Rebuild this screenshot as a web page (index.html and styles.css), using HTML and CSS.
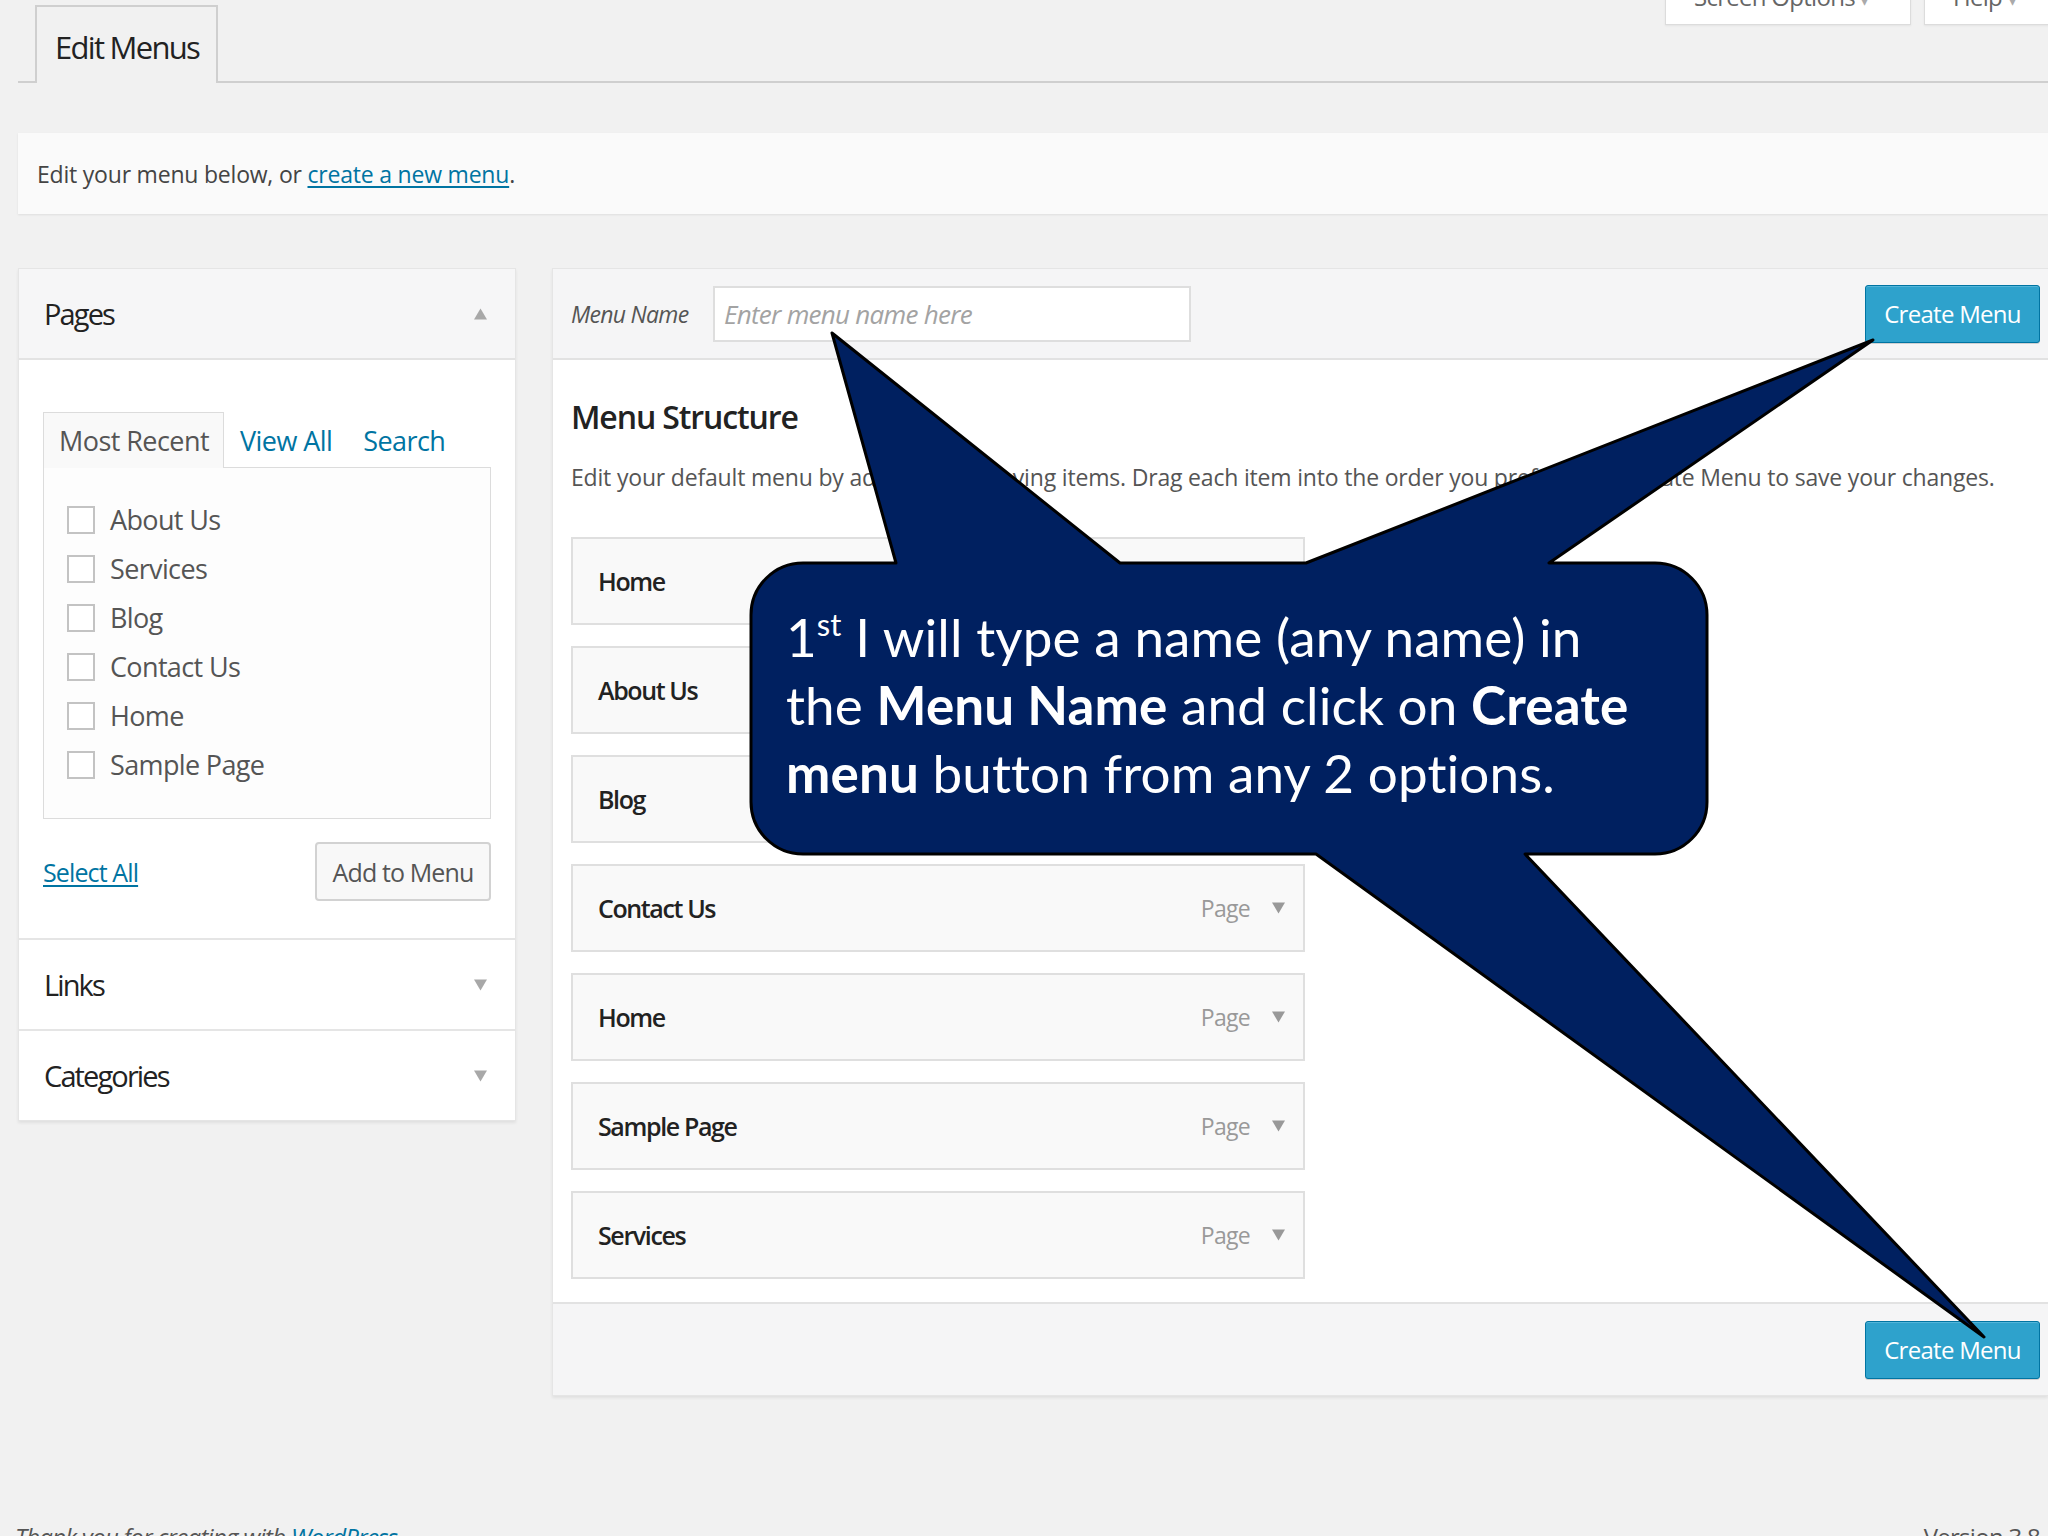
FILE: index.html
```html
<!DOCTYPE html>
<html lang="en">
<head>
<meta charset="utf-8">
<title>Edit Menus</title>
<link rel="stylesheet" href="styles.css">
</head>
<body>
<div class="wrap">
  <div class="top">
    <div class="nav-tab">Edit Menus</div>
    <div class="meta">
      <div class="meta-btn screen">Screen Options <span class="caret">▾</span></div>
      <div class="meta-btn help">Help <span class="caret">▾</span></div>
    </div>
  </div>

  <div class="notice"><span>Edit your menu below, or <a class="link" href="#">create a new menu</a>.</span></div>

  <div class="columns">
    <div class="left">
      <div class="accordion">
        <div class="acc-section open">
          <div class="acc-head grey"><span>Pages</span><svg class="tri" viewBox="0 0 14 12"><path d="M7 0 L14 12 L0 12 Z"/></svg></div>
          <div class="acc-body">
            <div class="tabs">
              <div class="tab active">Most Recent</div>
              <div class="tab">View All</div>
              <div class="tab">Search</div>
            </div>
            <div class="checklist">
              <label class="check"><span class="box"></span>About Us</label>
              <label class="check"><span class="box"></span>Services</label>
              <label class="check"><span class="box"></span>Blog</label>
              <label class="check"><span class="box"></span>Contact Us</label>
              <label class="check"><span class="box"></span>Home</label>
              <label class="check"><span class="box"></span>Sample Page</label>
            </div>
            <div class="actions">
              <a class="link select-all" href="#">Select All</a>
              <div class="btn-secondary">Add to Menu</div>
            </div>
          </div>
        </div>
        <div class="acc-section">
          <div class="acc-head"><span>Links</span><svg class="tri" viewBox="0 0 14 12"><path d="M0 0 L14 0 L7 12 Z"/></svg></div>
        </div>
        <div class="acc-section">
          <div class="acc-head"><span>Categories</span><svg class="tri" viewBox="0 0 14 12"><path d="M0 0 L14 0 L7 12 Z"/></svg></div>
        </div>
      </div>
    </div>

    <div class="right">
      <div class="panel-head">
        <span class="menu-name-label">Menu Name</span>
        <div class="name-input">Enter menu name here</div>
        <div class="btn-primary">Create Menu</div>
      </div>
      <div class="panel-body">
        <h3 class="structure-title">Menu Structure</h3>
        <p class="structure-desc">Edit your default menu by adding or removing items. Drag each item into the order you prefer. Click Create Menu to save your changes.</p>
        <div class="items">
          <div class="item"><span class="item-title">Home</span><span class="item-type">Page</span><svg class="tri small" viewBox="0 0 14 12"><path d="M0 0 L14 0 L7 12 Z"/></svg></div>
          <div class="item"><span class="item-title">About Us</span><span class="item-type">Page</span><svg class="tri small" viewBox="0 0 14 12"><path d="M0 0 L14 0 L7 12 Z"/></svg></div>
          <div class="item"><span class="item-title">Blog</span><span class="item-type">Page</span><svg class="tri small" viewBox="0 0 14 12"><path d="M0 0 L14 0 L7 12 Z"/></svg></div>
          <div class="item"><span class="item-title">Contact Us</span><span class="item-type">Page</span><svg class="tri small" viewBox="0 0 14 12"><path d="M0 0 L14 0 L7 12 Z"/></svg></div>
          <div class="item"><span class="item-title">Home</span><span class="item-type">Page</span><svg class="tri small" viewBox="0 0 14 12"><path d="M0 0 L14 0 L7 12 Z"/></svg></div>
          <div class="item"><span class="item-title">Sample Page</span><span class="item-type">Page</span><svg class="tri small" viewBox="0 0 14 12"><path d="M0 0 L14 0 L7 12 Z"/></svg></div>
          <div class="item"><span class="item-title">Services</span><span class="item-type">Page</span><svg class="tri small" viewBox="0 0 14 12"><path d="M0 0 L14 0 L7 12 Z"/></svg></div>
        </div>
      </div>
      <div class="panel-foot">
        <div class="btn-primary">Create Menu</div>
      </div>
    </div>
  </div>

  <div class="footer">
    <span class="thanks">Thank you for creating with <a class="link plain" href="#">WordPress</a>.</span>
    <span class="version">Version 3.8</span>
  </div>
</div>

<div class="callout">
  <svg class="callout-shape" width="2048" height="1536" viewBox="0 0 2048 1536">
    <path d="M803 563 L896 563 L832 333 L1120 563 L1306 563 L1873 340 L1549 563 L1655 563 A52 52 0 0 1 1707 615 L1707 802 A52 52 0 0 1 1655 854 L1525 854 L1984 1337 L1316 854 L803 854 A52 52 0 0 1 751 802 L751 615 A52 52 0 0 1 803 563 Z"/>
  </svg>
  <div class="callout-text">1<sup>st</sup> I will type a name (any name) in<br>the <b>Menu Name</b> and click on <b>Create</b><br><b>menu</b> button from any 2 options.</div>
</div>
</body>
</html>
```

FILE: styles.css
```css
html, body {
  margin: 0;
  padding: 0;
}
body {
  width: 2048px;
  height: 1536px;
  overflow: hidden;
  position: relative;
  background: #f1f1f1;
  font-family: "Open Sans", "Liberation Sans", sans-serif;
  letter-spacing: -0.045em;
  color: #444;
}
.wrap {
  padding-left: 18px;
}
.link {
  color: #0074a2;
  text-decoration: underline;
  text-underline-offset: 3px;
}
.link.plain {
  text-decoration: none;
}

/* top tab row */
.top {
  display: flex;
  justify-content: space-between;
  align-items: flex-start;
  border-bottom: 2px solid #cfcfcf;
  height: 81px;
}
.nav-tab {
  margin-left: 17px;
  margin-top: 3px;
  height: 78px;
  padding: 4px 17px 0 18px;
  box-sizing: border-box;
  border: 2px solid #cfcfcf;
  border-bottom: none;
  background: #f1f1f1;
  display: flex;
  align-items: center;
  font-size: 31px;
  letter-spacing: -0.055em;
  color: #222;
  position: relative;
  top: 2px;
}
.meta {
  display: flex;
  gap: 13px;
  margin-right: -26px;
}
.meta-btn {
  margin-top: -30px;
  height: 55px;
  box-sizing: border-box;
  background: #fff;
  border: 1px solid #dcdcdc;
  box-shadow: 0 1px 2px rgba(0,0,0,0.06);
  font-size: 24px;
  color: #666;
  line-height: 52px;
  padding: 0 28px;
  white-space: nowrap;
}
.meta-btn.screen { width: 246px; }
.meta-btn.help { width: 150px; }
.caret { color: #aaa; font-size: 18px; }

/* notice */
.notice {
  margin-top: 50px;
  height: 81px;
  box-sizing: border-box;
  background: #fafafa;
  box-shadow: 0 1px 2px rgba(0,0,0,0.08);
  display: flex;
  align-items: center;
  padding-left: 19px;
  font-size: 23px;
  letter-spacing: -0.009em;
  color: #444;
}

/* columns */
.columns {
  margin-top: 54px;
  display: flex;
  gap: 36px;
  align-items: flex-start;
}
.left {
  width: 498px;
  flex: none;
}
.accordion {
  background: #fff;
  border: 1px solid #e5e5e5;
  box-shadow: 0 2px 3px rgba(0,0,0,0.07);
}
.acc-section + .acc-section {
  border-top: 2px solid #e5e5e5;
}
.acc-head {
  height: 89px;
  display: flex;
  align-items: center;
  justify-content: space-between;
  padding: 0 28px 0 25px;
  font-size: 29px;
  letter-spacing: -0.065em;
  color: #222;
}
.acc-head.grey {
  background: #f6f6f7;
  border-bottom: 2px solid #e3e3e3;
}
.tri {
  width: 13px;
  height: 12px;
  fill: #a8a8a8;
}
.acc-body {
  padding: 51px 24px 37px 24px;
}
.tabs {
  display: flex;
  align-items: flex-end;
  height: 56px;
  letter-spacing: -0.035em;
}
.tab {
  font-size: 27px;
  color: #0074a2;
  padding: 0 15px 0 16px;
  line-height: 52px;
}
.tab.active {
  color: #555;
  background: #f9f9f9;
  border: 1px solid #dcdcdc;
  border-bottom: none;
  height: 56px;
  box-sizing: border-box;
  padding: 0 14px 0 15px;
  line-height: 56px;
  position: relative;
  top: 1px;
}
.checklist {
  border: 1px solid #dcdcdc;
  background: #fdfdfd;
  height: 352px;
  box-sizing: border-box;
  padding: 27px 0 0 23px;
  letter-spacing: -0.04em;
}
.check {
  display: flex;
  align-items: center;
  height: 49px;
  font-size: 27px;
  color: #555;
}
.box {
  width: 28px;
  height: 28px;
  box-sizing: border-box;
  border: 2px solid #c3c3c3;
  background: #fff;
  margin-right: 15px;
  flex: none;
}
.actions {
  margin-top: 23px;
  display: flex;
  align-items: center;
  justify-content: space-between;
  letter-spacing: -0.055em;
}
.select-all {
  font-size: 25px;
}
.btn-secondary {
  width: 176px;
  height: 59px;
  box-sizing: border-box;
  border: 2px solid #d2d2d2;
  border-radius: 4px;
  background: #f8f8f8;
  display: flex;
  align-items: center;
  justify-content: center;
  font-size: 25px;
  color: #555;
}

/* right panel */
.right {
  flex: 1;
  background: #fff;
  border: 1px solid #e5e5e5;
  border-right: none;
  box-shadow: 0 2px 3px rgba(0,0,0,0.07);
}
.panel-head {
  height: 91px;
  box-sizing: border-box;
  background: #f5f5f6;
  border-bottom: 2px solid #e2e2e2;
  display: flex;
  align-items: center;
  padding: 0 8px 0 18px;
}
.menu-name-label {
  font-size: 23px;
  font-style: italic;
  color: #555;
  width: 142px;
  flex: none;
}
.name-input {
  width: 478px;
  height: 56px;
  box-sizing: border-box;
  border: 2px solid #dedede;
  background: #fff;
  font-size: 26px;
  font-style: italic;
  color: #a3a3a3;
  padding-left: 9px;
  display: flex;
  align-items: center;
}
.btn-primary {
  margin-left: auto;
  width: 175px;
  height: 58px;
  box-sizing: border-box;
  background: #2ea2cc;
  border: 1px solid #0074a2;
  border-radius: 3px;
  box-shadow: inset 0 1px 0 rgba(120,200,230,0.5), 0 1px 0 rgba(0,0,0,0.15);
  color: #fff;
  font-size: 24px;
  letter-spacing: -0.03em;
  display: flex;
  align-items: center;
  justify-content: center;
}
.panel-body {
  padding: 35px 0 23px 18px;
}
.structure-title {
  margin: 0;
  font-size: 32px;
  line-height: 44px;
  font-weight: 600;
  color: #222;
  letter-spacing: -0.035em;
}
.structure-desc {
  margin: 22px 0 0 0;
  font-size: 23px;
  line-height: 32px;
  color: #555;
  letter-spacing: -0.008em;
  white-space: nowrap;
}
.items {
  margin-top: 44px;
  display: flex;
  flex-direction: column;
  gap: 21px;
}
.item {
  width: 734px;
  height: 88px;
  box-sizing: border-box;
  border: 2px solid #dfdfdf;
  background: #f9f9f9;
  display: flex;
  align-items: center;
  padding: 0 18px 0 25px;
}
.item-title {
  font-size: 25px;
  font-weight: 600;
  color: #222;
  letter-spacing: -0.055em;
}
.item-type {
  margin-left: auto;
  font-size: 23px;
  color: #999;
  margin-right: 22px;
}
.tri.small {
  width: 13px;
  height: 12px;
  fill: #999;
}
.panel-foot {
  height: 93px;
  box-sizing: border-box;
  border-top: 2px solid #e2e2e2;
  background: #f5f5f6;
  display: flex;
  align-items: center;
  padding-right: 8px;
}

/* footer */
.footer {
  margin-top: 124px;
  display: flex;
  justify-content: space-between;
  font-size: 24px;
  color: #555;
  padding-right: 8px;
}
.thanks {
  font-style: italic;
  margin-left: -3px;
}

/* callout overlay */
.callout {
  position: absolute;
  left: 0;
  top: 0;
  width: 2048px;
  height: 1536px;
  pointer-events: none;
}
.callout-shape {
  position: absolute;
  left: 0;
  top: 0;
}
.callout-shape path {
  fill: #002060;
  stroke: #000;
  stroke-width: 3;
  stroke-linejoin: round;
}
.callout-text {
  position: absolute;
  left: 786px;
  top: 603px;
  font-family: "Lato", "Open Sans", sans-serif;
  letter-spacing: 0.1px;
  font-size: 53px;
  line-height: 68px;
  color: #fff;
  white-space: nowrap;
}
.callout-text sup {
  font-size: 31px;
  line-height: 0;
  vertical-align: 0;
  position: relative;
  top: -21px;
}
.callout-text b {
  font-weight: 700;
}
```
